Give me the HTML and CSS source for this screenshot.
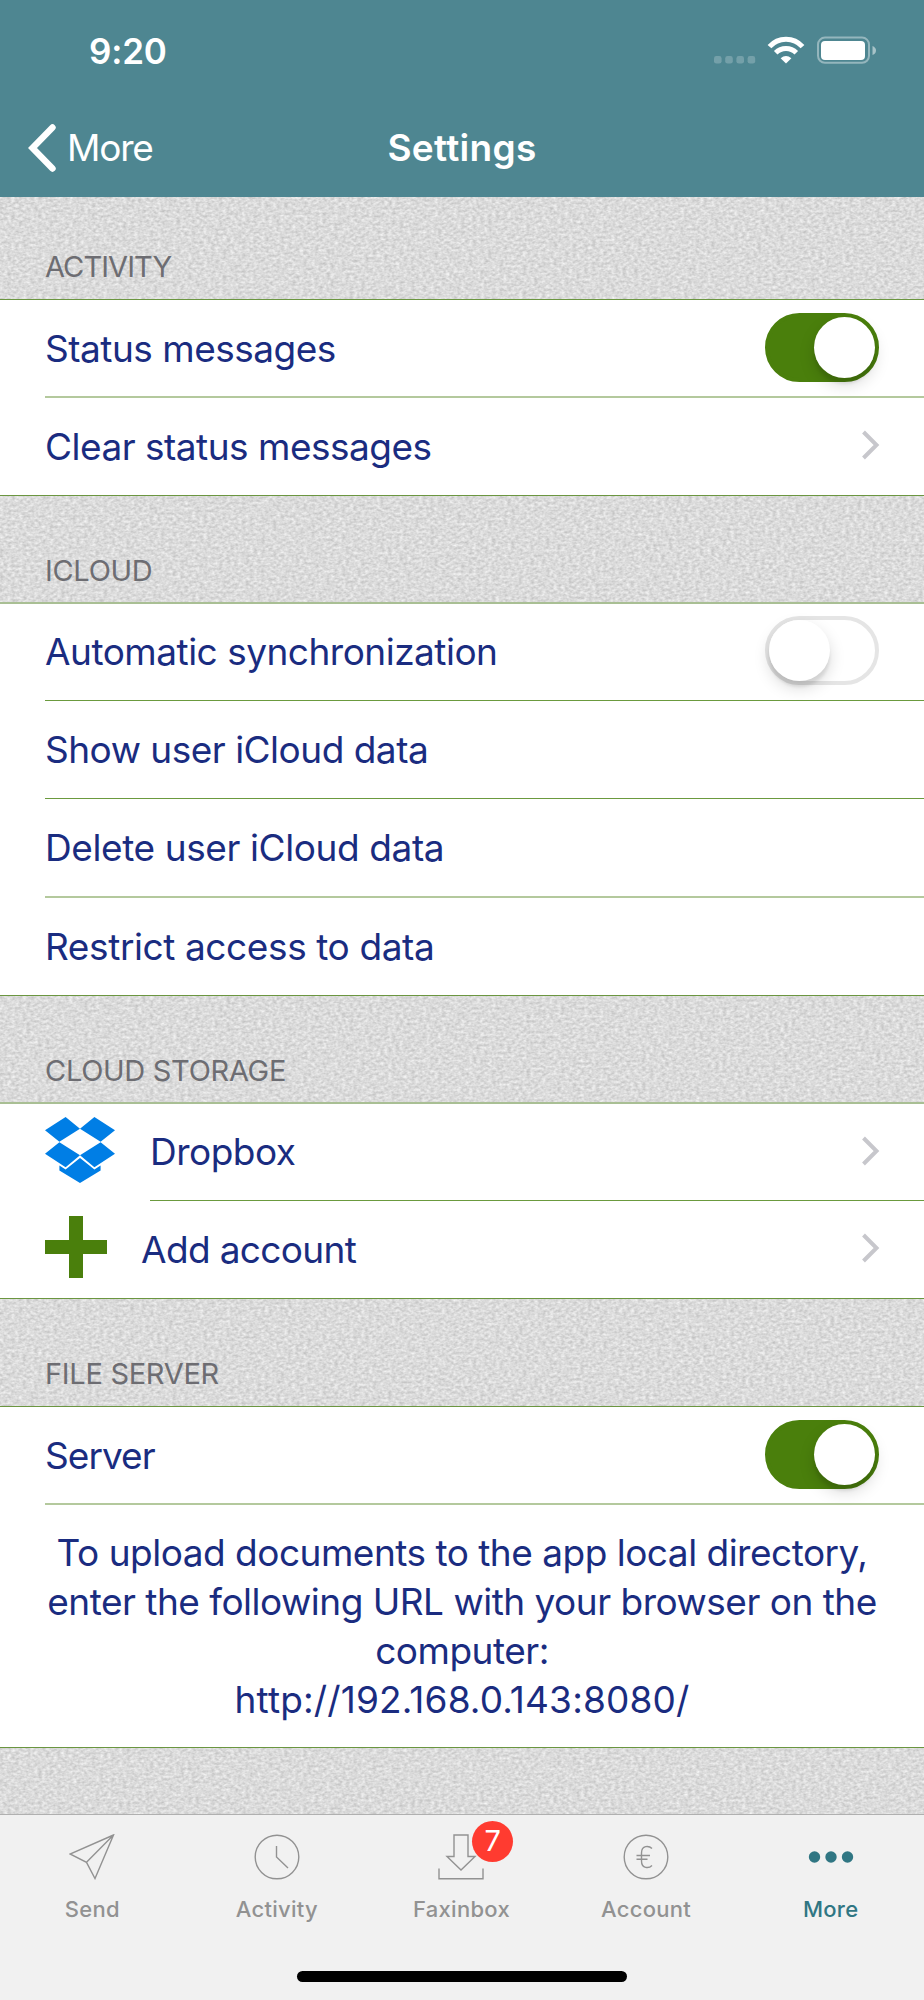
FILE: index.html
```html
<!DOCTYPE html>
<html lang="en">
<head>
<meta charset="utf-8">
<title>Settings</title>
<link rel="stylesheet" href="styles.css">
</head>
<body>
<div class="screen">
  <header class="top">
    <div class="status">
      <span class="time"><span>9:20</span></span>
      <span class="indicators">
        <svg width="168" height="32" viewBox="0 0 168 32">
          <g fill="#fff" fill-opacity=".22"><rect x="2" y="20" width="7.6" height="7.6" rx="2.4"/><rect x="13.2" y="20" width="7.6" height="7.6" rx="2.4"/><rect x="24.4" y="20" width="7.6" height="7.6" rx="2.4"/><rect x="35.6" y="20" width="7.6" height="7.6" rx="2.4"/></g>
          <g fill="none" stroke="#fff" stroke-width="5"><path d="M57.5 10.6A22 22 0 0 1 90.5 10.6"/><path d="M63.7 16.8A14.5 14.5 0 0 1 84.3 16.8"/></g>
          <path fill="#fff" d="M68.6 22.3Q74 17.6 79.4 22.3L74 27.6Z"/>
          <rect x="106" y="1.6" width="51" height="25.2" rx="7" fill="none" stroke="#fff" stroke-opacity=".4" stroke-width="2"/>
          <rect x="109" y="5" width="44" height="19" rx="4" fill="#fff"/>
          <path d="M160.500 10Q164 11.500 164 14.500T160.500 19Z" fill="#fff" fill-opacity=".5"/>
        </svg>
      </span>
    </div>
    <nav class="nav">
      <span class="back">
        <svg width="28" height="48" viewBox="0 0 28 48"><path d="M24.500 3.500 4.500 24 24.500 44.500" fill="none" stroke="#fff" stroke-width="6.400" stroke-linecap="round"/></svg>
        <span class="back-label">More</span>
      </span>
      <h1 class="title">Settings</h1>
    </nav>
  </header>

  <main class="content">
    <svg class="paper" width="924" height="1620"><filter id="grain" x="0" y="0" width="100%" height="100%" color-interpolation-filters="sRGB"><feTurbulence type="fractalNoise" baseFrequency=".26 .38" numOctaves="2" seed="4"/><feColorMatrix values=".26 0 0 0 .728 .26 0 0 0 .728 .26 0 0 0 .728 0 0 0 0 1"/></filter><rect width="924" height="1620" filter="url(#grain)"/></svg>

    <h2 class="heading first"><span class="h-activity">ACTIVITY</span></h2>
    <section class="group g1">
      <div class="row short"><span>Status messages</span><span class="switch on"><i></i></span></div>
      <hr class="soft">
      <div class="row"><span>Clear status messages</span><svg class="chev" width="20" height="30" viewBox="0 0 20 30"><path d="M2.500 2 15.500 15 2.500 28" fill="none" stroke="#c7c7cc" stroke-width="4"/></svg></div>
    </section>

    <h2 class="heading"><span>ICLOUD</span></h2>
    <section class="group g2">
      <div class="row short"><span>Automatic synchronization</span><span class="switch"><i></i></span></div>
      <hr>
      <div class="row"><span>Show user iCloud data</span></div>
      <hr>
      <div class="row"><span class="loose">Delete user iCloud data</span></div>
      <hr class="soft">
      <div class="row"><span class="loose">Restrict access to data</span></div>
    </section>

    <h2 class="heading"><span>CLOUD STORAGE</span></h2>
    <section class="group g3">
      <div class="row short">
        <svg class="dropbox" width="70" height="66" viewBox="0 0 70 66" fill="#007ee5"><path d="M20.600 0 35 11.700 14.400 24.700 0 13.200ZM49.400 0 70 13.200 55.600 24.700 35 11.700ZM14.400 25.300 35 38.300 20.600 50.200 0 36.700ZM55.600 25.300 70 36.700 49.400 50.200 35 38.300ZM35 41 49.400 52.600 55.600 48.600V53.400L35 66 14.400 53.400V48.600L20.600 52.600Z"/></svg>
        <span>Dropbox</span><svg class="chev" width="20" height="30" viewBox="0 0 20 30"><path d="M2.500 2 15.500 15 2.500 28" fill="none" stroke="#c7c7cc" stroke-width="4"/></svg></div>
      <hr class="inset">
      <div class="row">
        <svg class="plus" width="62" height="62" viewBox="0 0 62 62"><path d="M24 0h14v24h24v14H38v24H24V38H0V24h24Z" fill="#4a7f0c"/></svg>
        <span class="add">Add account</span><svg class="chev" width="20" height="30" viewBox="0 0 20 30"><path d="M2.500 2 15.500 15 2.500 28" fill="none" stroke="#c7c7cc" stroke-width="4"/></svg></div>
    </section>

    <h2 class="heading last"><span>FILE SERVER</span></h2>
    <section class="group g4">
      <div class="row short"><span class="server">Server</span><span class="switch on"><i></i></span></div>
      <hr class="soft">
      <p class="note">To upload documents to the app local directory,<br>enter the following URL with your browser on the<br>computer:<br><span class="url">http://192.168.0.143:8080/</span></p>
    </section>
  </main>

  <footer class="bottom">
    <div class="tabs">
      <div class="tab"><svg width="46" height="46" viewBox="0 0 46 46"><path d="M44.500 1 1 20 17.500 28.300 26 44.500ZM44.500 1 17.500 28.300"/></svg><span>Send</span></div>
      <div class="tab"><svg width="46" height="46" viewBox="0 0 46 46"><circle cx="23" cy="23" r="21.800"/><path d="M22.500 12V23L34 34"/></svg><span>Activity</span></div>
      <div class="tab"><svg width="46" height="46" viewBox="0 0 46 46"><path d="M16 1H30V22.500H37L23 36 9 22.500H16ZM1 34.500V44.700H45V34.500"/></svg><b class="badge">7</b><span>Faxinbox</span></div>
      <div class="tab"><svg width="46" height="46" viewBox="0 0 46 46"><circle cx="23" cy="23" r="21.800"/><path d="M29 14.500C26 11.500 18.500 11 18.500 19V27C18.500 35 26 34.500 29 31.500M13.500 21.500H27M13.500 25.300H24.500"/></svg><span>Account</span></div>
      <div class="tab active"><svg width="46" height="46" viewBox="0 0 46 46"><circle cx="6.500" cy="23" r="5.700"/><circle cx="23" cy="23" r="5.700"/><circle cx="39.500" cy="23" r="5.700"/></svg><span>More</span></div>
    </div>
    <div class="home"></div>
  </footer>
</div>
</body>
</html>
```
FILE: styles.css
```css
* { box-sizing: border-box; }
body { margin: 0; font-family: Inter, "Liberation Sans", sans-serif; }
.screen { width: 924px; height: 2000px; display: flex; flex-direction: column; overflow: hidden; background: #dadada; }

.top { height: 197px; background: #4e8691; color: #fff; display: flex; flex-direction: column; flex: none; }
.status { height: 100px; padding: 36px 44px 0 89px; display: flex; justify-content: space-between; }
.time { font-size: 35px; font-weight: 600; line-height: 30px; letter-spacing: -.2px; }
.nav { height: 97px; display: grid; grid-template-columns: 1fr auto 1fr; padding: 0 28px; }
.back { display: flex; padding-top: 24px; gap: 11px; }
.back-label { font-size: 37px; line-height: 48px; letter-spacing: -1.2px; }
.title { margin: 0; padding-top: 23px; font-size: 37px; font-weight: 600; line-height: 50px; letter-spacing: .3px; }
.indicators svg, .back svg { display: block; }

.content { position: relative; flex: none; height: 1617px; overflow: hidden; }
.paper { position: absolute; top: 0; left: 0; }
.heading { position: relative; margin: 0; height: 106px; padding: 57px 0 0 45px; font-size: 29px; font-weight: 400; line-height: 36px; letter-spacing: -.3px; color: #6d6d72; }
.heading.first { height: 102px; padding-top: 52px; }
.heading.last { height: 107px; }
.h-activity { letter-spacing: -.9px; }
.group { position: relative; background: #fff; color: #1a2c80; font-size: 37px; letter-spacing: -.5px; border-top: 1px solid #6b9640; border-bottom: 1px solid #6b9640; display: flex; flex-direction: column; }
.g1 { height: 197px; }
.g2, .g3 { border-top: 2px solid #a9bf94; }
.g2 { height: 394px; }
.g3 { height: 197px; }
.g4 { height: 342px; }
.row { flex: none; height: 97px; display: flex; align-items: center; padding: 0 45px 1px; }
.row.short { height: 96px; }
.g1 .short, .g4 .short { padding: 1px 45px 0; }
.group hr { flex: none; width: 879px; height: 1px; margin: 0 0 0 45px; border: 0; background: #6b9a3e; }
.group hr.soft { height: 2px; background: #b4c99d; }
.group hr.inset { width: 774px; margin-left: 150px; }
.switch { width: 114px; height: 69px; margin-left: auto; margin-top: -2px; border-radius: 35px; border: 4px solid #e5e5e5; display: flex; }
.switch i { width: 61px; height: 61px; border-radius: 50%; background: #fff; box-shadow: 0 7px 16px rgba(0,0,0,.15), 0 6px 3px rgba(0,0,0,.08); }
.switch.on { background: #4a7f0c; border-color: #4a7f0c; }
.switch.on i { margin-left: auto; }
.chev { margin: -2px -2px 0 auto; }
.loose { letter-spacing: -.4px; }
.dropbox { margin: -4px 35px 0 0; }
.plus { margin: -4px 34px 0 0; }
.add { letter-spacing: -.65px; }
.server { letter-spacing: -.95px; }
.note { margin: 0; padding-top: 23px; text-align: center; line-height: 49px; white-space: nowrap; }
.url { letter-spacing: .15px; }

.bottom { flex: 1; background: #f1f1f1; border-top: 1px solid #b0b0b0; }
.tabs { display: flex; padding: 19px 0 0; height: 156px; }
.tab { position: relative; width: 184.6px; display: flex; flex-direction: column; align-items: center; gap: 14px; color: #929292; font-size: 22px; font-weight: 500; line-height: 30px; letter-spacing: .3px; }
.tab svg { fill: none; stroke: #929292; stroke-width: 1.4; }
.tab.active { color: #307683; }
.tab.active svg { fill: #307683; stroke: none; }
.badge { position: absolute; left: 103px; top: -13px; width: 41px; height: 41px; border-radius: 50%; background: #ff3b30; color: #fff; font-size: 29px; font-weight: 400; line-height: 40px; text-align: center; letter-spacing: 0; }
.home { width: 330px; height: 11px; margin: 0 auto; border-radius: 6px; background: #000; }
```
